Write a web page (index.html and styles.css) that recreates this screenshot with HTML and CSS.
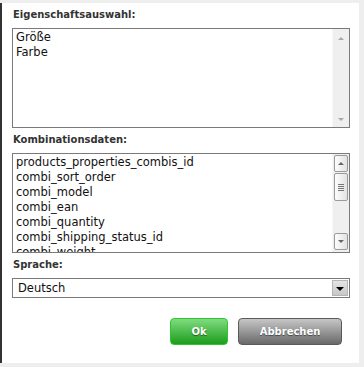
FILE: index.html
```html
<!DOCTYPE html>
<html lang="de">
<head>
    <meta charset="UTF-8">
    <title>Kombinationen</title>
    <link rel="stylesheet" href="styles.css">
</head>
<body>
    <div class="panel">
        <div class="field-label">Eigenschaftsauswahl:</div>
        <div class="listbox">
            <div class="list-items">
                <div>Größe</div>
                <div>Farbe</div>
            </div>
            <div class="scrollbar disabled">
                <span class="arrow up"></span>
                <span class="arrow down"></span>
            </div>
        </div>

        <div class="field-label">Kombinationsdaten:</div>
        <div class="listbox">
            <div class="list-items">
                <div>products_properties_combis_id</div>
                <div>combi_sort_order</div>
                <div>combi_model</div>
                <div>combi_ean</div>
                <div>combi_quantity</div>
                <div>combi_shipping_status_id</div>
                <div>combi_weight</div>
            </div>
            <div class="scrollbar">
                <div class="sb-btn"><span class="arrow up"></span></div>
                <div class="sb-thumb"><span class="grip"></span></div>
                <div class="sb-track"></div>
                <div class="sb-btn"><span class="arrow down"></span></div>
            </div>
        </div>

        <div class="field-label">Sprache:</div>
        <div class="select">
            <span class="select-value">Deutsch</span>
            <span class="select-btn"><span class="caret"></span></span>
        </div>

        <div class="actions">
            <button class="btn btn-ok">Ok</button>
            <button class="btn btn-cancel">Abbrechen</button>
        </div>
    </div>
</body>
</html>
```

FILE: styles.css
```css
body {
    margin: 0;
    background-color: #eeeeee;
    font-family: 'DejaVu Sans', Verdana, sans-serif;
}

.panel {
    margin-top: 3px;
    width: 338px;
    height: 354px;
    padding: 6px 9px 0 10px;
    background-color: #fff;
    border-left: 2px solid #333;
}

.field-label {
    font-size: 10px;
    font-weight: bold;
    line-height: 12px;
    color: #333;
    padding-left: 1px;
    margin-bottom: 7px;
}

.listbox {
    display: flex;
    height: 98px;
    border: 1px solid #7a7a7a;
    margin-bottom: 6px;
}

.list-items {
    flex: 1;
    overflow: hidden;
    padding: 1px 3px;
    font-size: 11.5px;
    line-height: 15px;
    color: #111;
    white-space: nowrap;
}

.listbox + .field-label {
    margin-top: 0;
}

/* fake windows scrollbars */
.scrollbar {
    width: 16px;
    display: flex;
    flex-direction: column;
    background-color: #efefef;
    border-left: 1px solid #f7f7f7;
}

.scrollbar.disabled {
    justify-content: space-between;
    align-items: center;
    padding: 8px 0 6px;
}

.arrow {
    width: 0;
    height: 0;
    border-left: 3px solid transparent;
    border-right: 3px solid transparent;
}

.arrow.up {
    border-bottom: 3px solid #666;
}

.arrow.down {
    border-top: 3px solid #666;
}

.scrollbar.disabled .arrow.up {
    border-bottom-color: #a8a8a8;
}

.scrollbar.disabled .arrow.down {
    border-top-color: #a8a8a8;
}

.sb-btn,
.sb-thumb {
    box-sizing: border-box;
    width: 14px;
    margin-left: 1px;
    border: 1px solid #9a9a9a;
    border-radius: 2px;
    background: linear-gradient(to right, #fdfdfd, #e2e2e2);
    display: flex;
    align-items: center;
    justify-content: center;
}

.sb-btn {
    height: 17px;
    margin-top: 1px;
}

.sb-thumb {
    height: 28px;
    margin-top: 1px;
}

.grip {
    width: 6px;
    height: 7px;
    background: repeating-linear-gradient(to bottom, #777 0, #777 1px, transparent 1px, transparent 2px);
}

.sb-track {
    flex: 1;
}

.sb-btn:last-child {
    margin-bottom: 2px;
}

.select {
    display: flex;
    align-items: center;
    height: 18px;
    border: 1px solid #7a7a7a;
    margin-bottom: 20px;
}

.select-value {
    flex: 1;
    padding-left: 5px;
    font-size: 11.5px;
    color: #111;
}

.select-btn {
    width: 16px;
    height: 16px;
    margin-right: 1px;
    background: linear-gradient(#e4e4e4, #c8c8c8);
    border: 1px solid #b5b5b5;
    box-sizing: border-box;
    display: flex;
    align-items: center;
    justify-content: center;
}

.caret {
    border-left: 4px solid transparent;
    border-right: 4px solid transparent;
    border-top: 4px solid #000;
    margin-top: 1px;
}

.actions {
    display: flex;
    justify-content: flex-end;
    gap: 10px;
    padding-right: 8px;
}

.btn {
    height: 27px;
    font-family: 'DejaVu Sans', Verdana, sans-serif;
    font-size: 10px;
    font-weight: bold;
    color: #fff;
    text-shadow: 0 1px 1px rgba(0, 0, 0, 0.5);
    border-radius: 4px;
    cursor: pointer;
    padding: 0;
}

.btn-ok {
    width: 58px;
    background: linear-gradient(#7fdc7f, #1c9c1c);
    border: 1px solid #2ec62e;
}

.btn-cancel {
    width: 104px;
    background: linear-gradient(#c6c6c6, #696969);
    border: 1px solid #5a5a5a;
}
```
